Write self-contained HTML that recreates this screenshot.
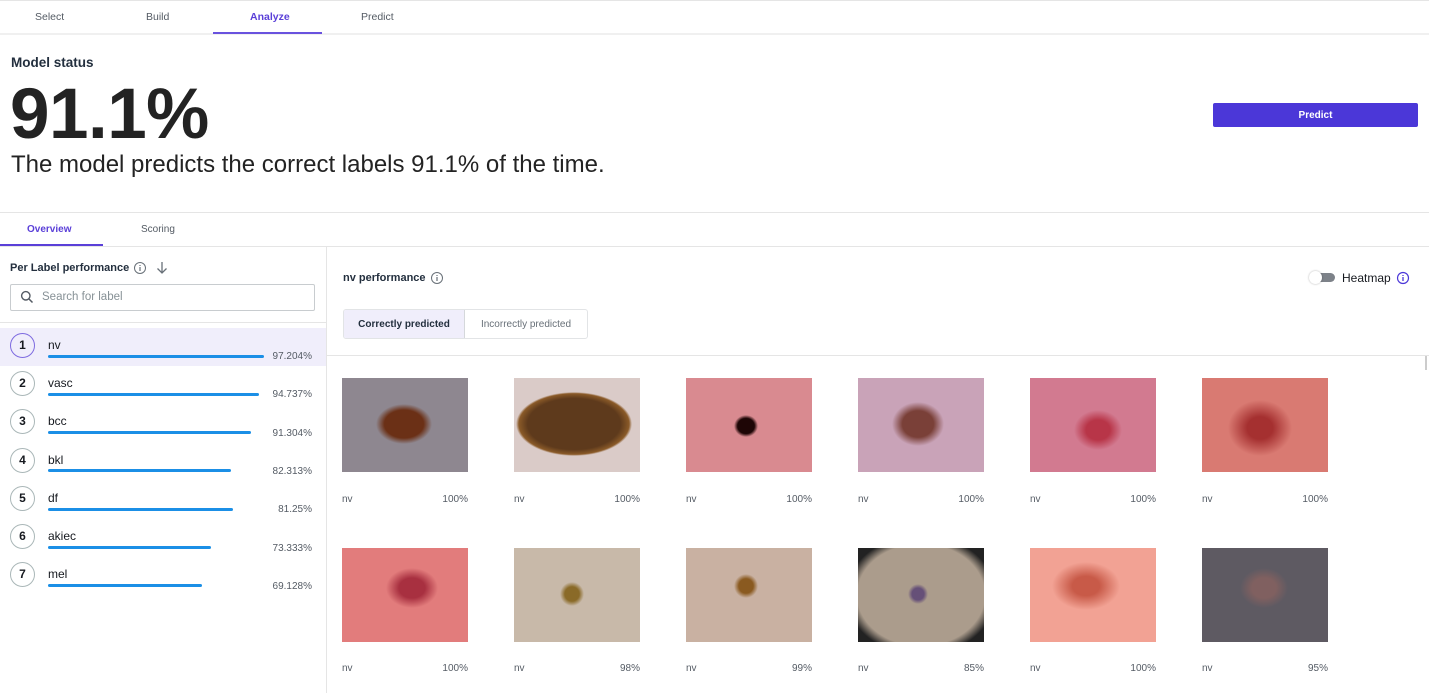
<!DOCTYPE html>
<html><head><meta charset="utf-8"><style>
*{margin:0;padding:0;box-sizing:border-box}
body{width:1429px;height:693px;overflow:hidden;background:#fff;font-family:"Liberation Sans",sans-serif;color:#16191f;position:relative}
.a{position:absolute}
.t{font-size:11px;color:#545b64;white-space:nowrap}
.img{position:absolute;width:126px;height:94px}
.cap{position:absolute;font-size:10px;color:#545b64;width:126px}
.cap span{position:absolute;right:0}
.circ{position:absolute;left:10px;width:25px;height:25px;border:1px solid #aab7b8;border-radius:50%;font-size:12px;font-weight:bold;text-align:center;line-height:23px}
.lb{position:absolute;left:48px;font-size:12px}
.bar{position:absolute;left:48px;height:3px;background:#1b8fe6;border-radius:2px}
.pc{position:absolute;right:1117px;font-size:10px;color:#545b64;text-align:right;width:60px}
</style></head><body>
<div class="a" style="left:0;top:0;width:1429px;height:1px;background:#e5e5e5"></div>
<div class="a" style="left:0;top:33px;width:1429px;height:2px;background:#f0f0f0"></div>
<div class="a t" style="left:35px;top:11px;font-size:10.5px">Select</div>
<div class="a t" style="left:146px;top:11px;font-size:10.5px">Build</div>
<div class="a t" style="left:250px;top:11px;font-size:10.5px;color:#5a3fd8;font-weight:bold">Analyze</div>
<div class="a t" style="left:361px;top:11px;font-size:10.5px">Predict</div>
<div class="a" style="left:213px;top:32px;width:109px;height:2px;background:#6952de"></div>
<div class="a" style="left:11px;top:55px;font-size:13.5px;font-weight:bold;color:#232f3e">Model status</div>
<div class="a" style="left:10px;top:75px;font-size:71px;font-weight:bold;color:#232323;line-height:80px;letter-spacing:-0.5px">91.1%</div>
<div class="a" style="left:11px;top:151px;font-size:24px;color:#232323">The model predicts the correct labels 91.1% of the time.</div>
<div class="a" style="left:1213px;top:103px;width:205px;height:24px;background:#4b37d8;border-radius:2px;color:#fff;font-size:10px;font-weight:bold;text-align:center;line-height:25px">Predict</div>
<div class="a" style="left:0;top:212px;width:1429px;height:1px;background:#e5e5e5"></div>
<div class="a t" style="left:27px;top:224px;font-size:10px;color:#5a3fd8;font-weight:bold">Overview</div>
<div class="a t" style="left:141px;top:224px;font-size:10px">Scoring</div>
<div class="a" style="left:0;top:244px;width:103px;height:2px;background:#5a3fd8"></div>
<div class="a" style="left:0;top:246px;width:1429px;height:1px;background:#e5e5e5"></div>
<div class="a" style="left:326px;top:246px;width:1px;height:447px;background:#e5e5e5"></div>
<div class="a" style="left:10px;top:262px;font-size:11px;font-weight:bold;color:#232f3e">Per Label performance</div>
<svg class="a" style="left:133px;top:261px" width="14" height="14" viewBox="0 0 14 14"><circle cx="7" cy="7" r="5.5" fill="none" stroke="#687078" stroke-width="1"/><path d="M7 6v4M7 4v1" stroke="#687078" stroke-width="1.2"/></svg>
<svg class="a" style="left:155px;top:261px" width="14" height="14" viewBox="0 0 14 14"><path d="M7 1v11M2.5 7.5L7 12l4.5-4.5" fill="none" stroke="#687078" stroke-width="1.3"/></svg>
<div class="a" style="left:10px;top:284px;width:305px;height:27px;border:1px solid #c8cccf;border-radius:2px"></div>
<svg class="a" style="left:20px;top:290px" width="14" height="14" viewBox="0 0 14 14"><circle cx="5.8" cy="5.8" r="4.2" fill="none" stroke="#545b64" stroke-width="1.4"/><path d="M9 9l3.5 3.5" stroke="#545b64" stroke-width="1.5"/></svg>
<div class="a" style="left:42px;top:291px;font-size:11.5px;color:#879196">Search for label</div>
<div class="a" style="left:0;top:322px;width:326px;height:1px;background:#e5e5e5"></div>
<div class="a" style="left:0;top:328px;width:326px;height:38px;background:#f0eefb"></div>

<div class="circ" style="top:333px;border-color:#7e6be0">1</div><div class="lb" style="top:338px">nv</div><div class="bar" style="top:355px;width:216px"></div><div class="pc" style="top:351px">97.204%</div>
<div class="circ" style="top:371px">2</div><div class="lb" style="top:376px">vasc</div><div class="bar" style="top:393px;width:211px"></div><div class="pc" style="top:389px">94.737%</div>
<div class="circ" style="top:409px">3</div><div class="lb" style="top:414px">bcc</div><div class="bar" style="top:431px;width:203px"></div><div class="pc" style="top:428px">91.304%</div>
<div class="circ" style="top:448px">4</div><div class="lb" style="top:453px">bkl</div><div class="bar" style="top:469px;width:183px"></div><div class="pc" style="top:466px">82.313%</div>
<div class="circ" style="top:486px">5</div><div class="lb" style="top:491px">df</div><div class="bar" style="top:508px;width:185px"></div><div class="pc" style="top:504px">81.25%</div>
<div class="circ" style="top:524px">6</div><div class="lb" style="top:529px">akiec</div><div class="bar" style="top:546px;width:163px"></div><div class="pc" style="top:543px">73.333%</div>
<div class="circ" style="top:562px">7</div><div class="lb" style="top:567px">mel</div><div class="bar" style="top:584px;width:154px"></div><div class="pc" style="top:581px">69.128%</div>

<div class="a" style="left:343px;top:272px;font-size:11px;font-weight:bold;color:#232f3e">nv performance</div>
<svg class="a" style="left:430px;top:271px" width="14" height="14" viewBox="0 0 14 14"><circle cx="7" cy="7" r="5.5" fill="none" stroke="#687078" stroke-width="1"/><path d="M7 6v4M7 4v1" stroke="#687078" stroke-width="1.2"/></svg>
<div class="a" style="left:1312px;top:273px;width:23px;height:9px;background:#7d8289;border-radius:5px"></div>
<div class="a" style="left:1309px;top:271px;width:13px;height:13px;background:#fff;border-radius:50%;box-shadow:0 0 2px rgba(0,0,0,.3)"></div>
<div class="a" style="left:1342px;top:271px;font-size:12px;color:#16191f">Heatmap</div>
<svg class="a" style="left:1396px;top:271px" width="14" height="14" viewBox="0 0 14 14"><circle cx="7" cy="7" r="5.5" fill="none" stroke="#4b37d8" stroke-width="1.2"/><path d="M7 6v4M7 4v1" stroke="#4b37d8" stroke-width="1.3"/></svg>
<div class="a" style="left:343px;top:309px;width:245px;height:30px;border:1px solid #e2e4e6;border-radius:3px;overflow:hidden">
<div class="a" style="left:0;top:0;width:121px;height:28px;background:#f0eefb;border-right:1px solid #d5d8db;font-size:10px;font-weight:bold;text-align:center;line-height:30px;color:#232f3e">Correctly predicted</div>
<div class="a" style="left:121px;top:0;width:122px;height:28px;font-size:10px;text-align:center;line-height:30px;color:#687078">Incorrectly predicted</div>
</div>
<div class="a" style="left:327px;top:355px;width:1102px;height:1px;background:#e5e5e5"></div>
<div class="a" style="left:1425px;top:356px;width:2px;height:14px;background:#ccc"></div>

<div class="img" style="left:342px;top:378px;background:radial-gradient(ellipse 28px 20px at 62px 46px,#6b3016 70%,transparent 100%),#8e8790"></div>
<div class="img" style="left:514px;top:378px;background:radial-gradient(ellipse 58px 32px at 60px 46px,#5e3a1c 80%,#8a5a28 95%,transparent 100%),#dacbc8"></div>
<div class="img" style="left:686px;top:378px;background:radial-gradient(ellipse 12px 11px at 60px 48px,#1e0606 70%,transparent 100%),#d98a90"></div>
<div class="img" style="left:858px;top:378px;background:radial-gradient(ellipse 26px 22px at 60px 46px,#7a4038 60%,transparent 100%),#c9a3b8"></div>
<div class="img" style="left:1030px;top:378px;background:radial-gradient(ellipse 24px 20px at 68px 52px,#b83548 50%,transparent 100%),#d27a90"></div>
<div class="img" style="left:1202px;top:378px;background:radial-gradient(ellipse 32px 28px at 58px 50px,#a53030 40%,transparent 100%),#d97a72"></div>
<div class="cap" style="left:342px;top:494px">nv<span>100%</span></div>
<div class="cap" style="left:514px;top:494px">nv<span>100%</span></div>
<div class="cap" style="left:686px;top:494px">nv<span>100%</span></div>
<div class="cap" style="left:858px;top:494px">nv<span>100%</span></div>
<div class="cap" style="left:1030px;top:494px">nv<span>100%</span></div>
<div class="cap" style="left:1202px;top:494px">nv<span>100%</span></div>

<div class="img" style="left:342px;top:548px;background:radial-gradient(ellipse 26px 20px at 70px 40px,#a83040 50%,transparent 100%),#e27c7c"></div>
<div class="img" style="left:514px;top:548px;background:radial-gradient(ellipse 12px 12px at 58px 46px,#8a6a28 60%,transparent 100%),#c8b9a9"></div>
<div class="img" style="left:686px;top:548px;background:radial-gradient(ellipse 12px 12px at 60px 38px,#8a5a20 60%,transparent 100%),#c9b1a2"></div>
<div class="img" style="left:858px;top:548px;background:radial-gradient(ellipse 10px 10px at 60px 46px,#665078 60%,transparent 100%),radial-gradient(ellipse 75px 60px at 63px 47px,#ab9c8c 85%,#222 100%)"></div>
<div class="img" style="left:1030px;top:548px;background:radial-gradient(ellipse 34px 24px at 56px 38px,#c85a48 40%,transparent 100%),#f2a294"></div>
<div class="img" style="left:1202px;top:548px;background:radial-gradient(ellipse 24px 20px at 62px 40px,#806060 50%,transparent 100%),#5e5a62"></div>
<div class="cap" style="left:342px;top:663px">nv<span>100%</span></div>
<div class="cap" style="left:514px;top:663px">nv<span>98%</span></div>
<div class="cap" style="left:686px;top:663px">nv<span>99%</span></div>
<div class="cap" style="left:858px;top:663px">nv<span>85%</span></div>
<div class="cap" style="left:1030px;top:663px">nv<span>100%</span></div>
<div class="cap" style="left:1202px;top:663px">nv<span>95%</span></div>
</body></html>
